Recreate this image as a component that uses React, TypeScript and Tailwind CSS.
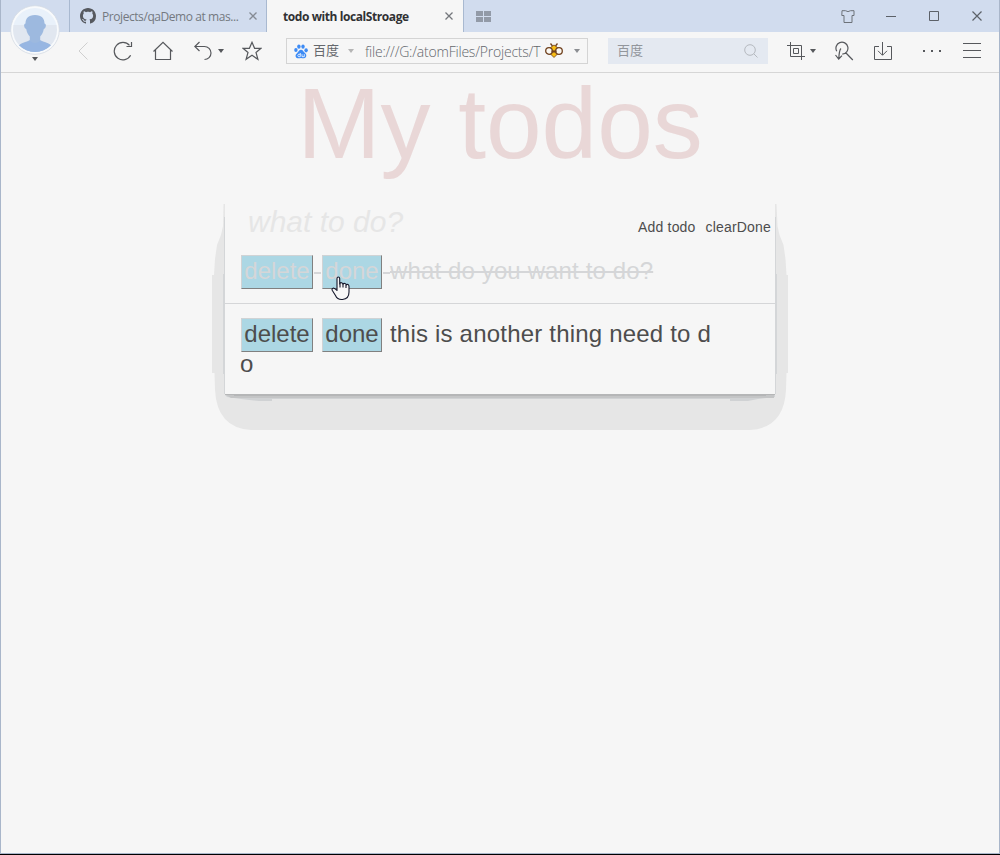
import React from "react";

const GITHUB =
  "M8 0C3.58 0 0 3.58 0 8c0 3.54 2.29 6.53 5.47 7.59.4.07.55-.17.55-.38 0-.19-.01-.82-.01-1.49-2.01.37-2.53-.49-2.69-.94-.09-.23-.48-.94-.82-1.13-.28-.15-.68-.52-.01-.53.63-.01 1.08.58 1.23.82.72 1.21 1.87.87 2.33.66.07-.52.28-.87.51-1.07-1.78-.2-3.64-.89-3.64-3.95 0-.87.31-1.59.82-2.15-.08-.2-.36-1.02.08-2.12 0 0 .67-.21 2.2.82.64-.18 1.32-.27 2-.27s1.36.09 2 .27c1.53-1.04 2.2-.82 2.2-.82.44 1.1.16 1.92.08 2.12.51.56.82 1.27.82 2.15 0 3.07-1.87 3.75-3.65 3.95.29.25.54.73.54 1.48 0 1.07-.01 1.93-.01 2.2 0 .21.15.46.55.38A8.01 8.01 0 0 0 16 8c0-4.42-3.58-8-8-8z";

function Icon({ w = 20, h = 20, className = "", children }: { w?: number; h?: number; className?: string; children: React.ReactNode }) {
  return (
    <svg width={w} height={h} viewBox={`0 0 ${w} ${h}`} fill="none" stroke="currentColor" className={`block shrink-0 ${className}`}>
      {children}
    </svg>
  );
}

function Caret({ className = "" }: { className?: string }) {
  return (
    <Icon w={6} h={4} className={className}>
      <path d="M0 0h6L3 4z" fill="currentColor" stroke="none" />
    </Icon>
  );
}

function Close({ className = "" }: { className?: string }) {
  return (
    <Icon w={8} h={8} className={className}>
      <path d="M.5.5l7 7M7.5.5l-7 7" strokeWidth="1.3" />
    </Icon>
  );
}

function TabBar() {
  return (
    <div className="flex h-8 w-full shrink-0 bg-[#d1dcee] text-[#5c6168]">
      <div className="w-[68px] shrink-0" />
      <div className="flex w-[198px] shrink-0 items-center border-x border-[#a9b9d0] pl-[10px]">
        <svg width="16" height="16" viewBox="0 0 16 16" className="mr-[6px] block shrink-0">
          <path d={GITHUB} fill="#56595f" />
        </svg>
        <span className="w-[147px] shrink-0 whitespace-nowrap pt-px text-[12px] leading-8 tracking-[-0.43px] text-[#747980]">Projects/qaDemo at mas...</span>
        <Close className="text-[#858b94]" />
      </div>
      <div className="flex w-[197px] shrink-0 items-center border-r border-[#a9b9d0] bg-[#f6f6f6] pl-[16px]">
        <span className="w-[162px] shrink-0 whitespace-nowrap pt-px text-[12px] font-bold leading-8 tracking-[-0.42px] text-[#303133]">todo with localStroage</span>
        <Close className="text-[#74777c]" />
      </div>
      <div className="flex flex-1 items-center pl-[12px]">
        <Icon w={15} h={11} className="text-[#929aa7]">
          <path d="M0 0h7v5H0zM8 0h7v5H8zM0 6h7v5H0zM8 6h7v5H8z" fill="currentColor" stroke="none" />
        </Icon>
      </div>
      <div className="flex shrink-0 items-center">
        <Icon w={14} h={13} className="mr-[31px] text-[#6d7279]">
          <path d="M1 .7h3.5Q7 2.6 9.500.7H13v4.800h-2v7H3v-7H.8z" />
        </Icon>
        <Icon w={10} h={13} className="mr-[33px]">
          <path d="M0 6.500h10" />
        </Icon>
        <Icon w={10} h={10} className="mr-[33px]">
          <path d="M.5.5h9v9h-9z" />
        </Icon>
        <Icon w={10} h={10} className="mr-[17px]">
          <path d="M.5.5l9 9M9.500.5l-9 9" strokeWidth="1.200" />
        </Icon>
      </div>
    </div>
  );
}

function Toolbar() {
  return (
    <div className="flex h-[41px] w-full shrink-0 items-center border-b border-[#d6d6d6] pl-[77px] pb-[2px] text-[#56585c]">
      <Icon w={10} h={18} className="mr-[25px] text-[#cfcfcf]">
        <path d="M9.500.5L1 9l8.500 8.500" />
      </Icon>
      <Icon w={20} h={20} className="mr-5">
        <path d="M17.600 14.300A8.700 8.700 0 1 1 16.500 4.400M18.500 1v4.500h-5" strokeWidth="1.200" />
      </Icon>
      <Icon w={20} h={20} className="mr-[21px]">
        <path d="M.5 10.500L10 1.300l9.500 9.200M2.500 8.500v10h15v-10" strokeWidth="1.200" />
      </Icon>
      <Icon w={18} h={20} className="mr-[6px]">
        <path d="M5.500 1L.8 5.500 5.500 10M1 5.500h9.500a6.500 6.500 0 0 1 0 13" strokeWidth="1.200" />
      </Icon>
      <Caret className="mr-[18px]" />
      <Icon w={20} h={20}>
        <path d="M10 1.300l2.600 6h6.400l-5 4.200 1.900 6.800-5.900-4-5.900 4L6 11.500 1 7.300h6.400z" strokeWidth="1.200" />
      </Icon>
      <div className="ml-6 flex h-[26px] w-[302px] shrink-0 items-center border border-[#d4d4d4] pl-[7px]">
        <svg width="14" height="15" viewBox="0 0 14 15" className="block shrink-0" fill="#3d8bf5">
          <ellipse cx="1.900" cy="6" rx="1.700" ry="2.100" />
          <ellipse cx="4.900" cy="2.600" rx="1.700" ry="2.200" />
          <ellipse cx="9" cy="2.600" rx="1.700" ry="2.200" />
          <ellipse cx="12.100" cy="6.300" rx="1.700" ry="2.100" />
          <path d="M7 5.800c2 0 2.400 2 4 3.300 2 1.600 1.700 4.900-1 5.200-1.200.1-1.900-.3-3-.3s-2 .4-3.300.2C1 13.700 1 10.700 3 9.200 4.600 8 5 5.800 7 5.800z" />
          <path d="M6.300 9v3.700H4.800q-1-.2-1-1.200t1-1.200h1.500M8 10.200v2.500h2.300v-2.500" fill="none" stroke="#fff" strokeWidth=".8" />
        </svg>
        <span className="-mt-[2px] ml-[5px] text-[13px] leading-6 text-[#65686d]">百度</span>
        <Caret className="ml-[9px] text-[#b5b5b5]" />
        <span className="ml-[11px] w-[180px] shrink-0 whitespace-nowrap pt-px text-[14px] font-light leading-6 tracking-[-0.21px] text-[#63676c]">file:///G:/atomFiles/Projects/T</span>
        <svg width="18" height="16" viewBox="0 0 18 16" className="block shrink-0" stroke="#70411e" strokeWidth="1.300">
          <path d="M9 2l3.500 2.500L10.500 8h-3l-2-3.500zM9 8.500l3.500 2.500L9 14.500 5.500 11z" fill="#f7bd12" strokeWidth=".8" />
          <path d="M5.500 .5l2 2.500M12.500 .5l-2 2.500" fill="none" />
          <ellipse cx="4" cy="8" rx="3.300" ry="3.300" fill="#faf8f2" />
          <ellipse cx="14" cy="8" rx="3.300" ry="3.300" fill="#faf8f2" />
          <path d="M6.500 8.500h5" strokeWidth="1.800" />
        </svg>
        <Caret className="ml-[11px] text-[#8b8e92]" />
      </div>
      <div className="ml-5 flex h-[26px] w-40 shrink-0 items-center justify-between bg-[#e4e9f1] pl-[9px] pr-[10px]">
        <span className="-mt-[2px] text-[13px] leading-[26px] text-[#92969c]">百度</span>
        <Icon w={14} h={14} className="text-[#b5b9bf]">
          <circle cx="6" cy="6" r="5.300" />
          <path d="M9.800 9.800l3.700 3.700" />
        </Icon>
      </div>
      <Icon w={18} h={18} className="ml-[19px] mr-[5px]">
        <path d="M0 3.500h14.500V18M3.500 0v14.500H18M6.500 6.500h5v5h-5z" />
      </Icon>
      <Caret className="mr-[18px]" />
      <Icon w={20} h={20} className="mr-5">
        <path d="M2.800 10.300A6 6 0 1 1 8.300 13.200M11.500 11.500L18.800 19M7 7.500Q5.200 9 4.800 17.800M1.500 14l3.200 4L8 14.700" strokeWidth="1.200" />
      </Icon>
      <Icon w={18} h={20} className="mr-[31px]">
        <path d="M5 5.500H.5v13h17v-13H13M8.500 1v13M4 9.800l4.500 4.500L13 9.800" />
      </Icon>
      <Icon w={18} h={4} className="mr-[22px]">
        <path d="M0 1h2v2H0zM8 1h2v2H8zM16 1h2v2h-2z" fill="currentColor" stroke="none" />
      </Icon>
      <Icon w={18} h={16}>
        <path d="M0 .5h18M0 7.500h18M0 14.500h18" />
      </Icon>
    </div>
  );
}

function Avatar() {
  return (
    <div className="absolute left-[10px] top-[5px] flex flex-col items-center">
      <svg width="50" height="50" viewBox="0 0 50 50" className="block">
        <defs>
          <clipPath id="face">
            <circle cx="25" cy="25" r="22" />
          </clipPath>
        </defs>
        <circle cx="25" cy="25" r="24.300" fill="#f8fafc" stroke="#d4dae3" strokeWidth=".8" />
        <g clipPath="url(#face)">
          <path d="M0 0h50v21H0z" fill="#e9f1fa" />
          <path d="M0 20h50v30H0z" fill="#e1e7f0" />
          <path d="M25 10c7 0 9.500 4 9.500 8.500 2.300.2 1.500 5-.7 5.500-.7 4-2.300 6-3.600 7.500V35C33 37.500 41 37 42 43v7H8v-7c1-6 9-5.500 11.800-8v-3.500c-1.300-1.500-2.900-3.500-3.600-7.500-2.200-.5-3-5.300-.7-5.500C15.500 14 18 10 25 10z" fill="#9db9df" />
          <path d="M20 36q5 4 10 0c4 2.300 11 2 12 7v7H8v-7c1-5 8-4.700 12-7z" fill="#97b6e2" />
          <path d="M0 47h50v3H0z" fill="#f8fafc" />
        </g>
      </svg>
      <Caret className="mt-[2px] text-[#56585c]" />
    </div>
  );
}

function TodoButton({ label, width }: { label: string; width: string }) {
  return (
    <span className={`flex h-[34px] shrink-0 items-center justify-center whitespace-nowrap border border-t-[#d0d3d5] border-l-[#d0d3d5] border-r-[#808080] border-b-[#808080] bg-[#acd7e4] pb-[2px] ${width}`}>
      {label}
    </span>
  );
}

function PanelShadow() {
  return (
    <svg width="576" height="228" viewBox="212 203 576 228" className="absolute -left-[13px] top-0 -z-10 block">
      <path
        d="M223.500 204h1.500V395H775V204h1.500l1 22 2 9 4 10 2 14 1 16h2v98h-2l-.5 17q-2 38-36 40H251q-34-2-36-40l-.5-17H212v-98h2l1-16 2-14 4-10 2-9z"
        fill="#e6e6e6"
      />
      <path d="M224 217v57h-1v100h1v20h552v-20h1V274h-1v-57z" fill="#d4d6d8" />
      <path d="M225 395h550v2l-17 2-10 2h-18v-2H272v2h-13l-18-2-14-2z" fill="#d0d2d4" />
      <path d="M226 395h548v3H231z" fill="#c4c5c6" />
      <path d="M225 394h550v1h-9v1H234v-1h-9z" fill="#b5b6b7" />
    </svg>
  );
}

function HandCursor() {
  return (
    <svg width="20" height="25" viewBox="0 0 20 25" className="absolute left-[106px] top-[73px] block" fill="#f8f8f8" stroke="#14172b" strokeWidth="1.100" strokeLinejoin="round">
      <path d="M6 14.500V2.500Q6 1 7.300 1T8.700 2.500V8Q9 6.500 10.500 6.700T12 8.500Q12.500 7 13.900 7.500T15.300 9Q16 8 17 8.500T18 10.500V16q0 7-6.500 7.500Q6.500 24 4.500 19.500L1.200 14.200Q.6 12.700 2 12.200T6 14.500z" />
      <path d="M9 7.500v4M12 8.500v3M15 9v3" fill="none" />
    </svg>
  );
}

export default function App() {
  return (
    <div className="relative flex h-[855px] w-[1000px] flex-col overflow-hidden border-b border-black bg-[#f6f6f6] font-['Open_Sans','Noto_Sans_CJK_SC',sans-serif]">
      <div className="flex min-h-0 w-full flex-1 flex-col border-x border-b border-[#a9b6ca]">
        <TabBar />
        <Toolbar />
        <main className="flex flex-col items-center font-['Liberation_Sans',Arial,sans-serif] text-[#4d4d4d]">
          <h1 className="h-[130px] text-[100px] leading-[100px] text-[#e9d7d7]">My todos</h1>
          <section className="relative isolate w-[550px]">
            <PanelShadow />
            <div className="flex h-[191px] flex-col bg-[#f6f6f6]">
              <div className="flex h-[45px] items-center justify-between pl-[23px] pr-[4px]">
                <span className="mb-[8px] whitespace-nowrap text-[30px] italic leading-[36px] text-[#e6e6e6]">what to do?</span>
                <span className="mt-[3px] flex gap-[10px] whitespace-nowrap text-[14px] tracking-[0.18px]">
                  <span>Add todo</span>
                  <span>clearDone</span>
                </span>
              </div>
              <div className="flex h-[56px] shrink-0 items-start border-b border-[#d5d6d8] pl-4 pt-[7px] text-2xl leading-[32px] text-[#d5d6d8]">
                <TodoButton label="delete" width="w-[72px]" />
                <span className="mt-[17px] h-[2px] w-[9px] border-x border-[#f6f6f6] bg-[#d5d6d8]" />
                <TodoButton label="done" width="w-[60px]" />
                <span className="ml-px mt-[17px] h-[2px] w-[7px] bg-[#d5d6d8]" />
                <span className="whitespace-nowrap tracking-[0.13px] line-through decoration-2">what do you want to do?</span>
              </div>
              <div className="flex flex-col pl-4 pt-[14px] text-2xl leading-[32px]">
                <div className="flex h-[34px] items-start">
                  <TodoButton label="delete" width="w-[72px]" />
                  <span className="w-[9px]" />
                  <TodoButton label="done" width="w-[60px]" />
                  <span className="ml-2 whitespace-nowrap tracking-[0.2px]">this is another thing need to d</span>
                </div>
                <span className="-ml-px -mt-[4px]">o</span>
              </div>
            </div>
            <HandCursor />
          </section>
        </main>
      </div>
      <Avatar />
    </div>
  );
}
